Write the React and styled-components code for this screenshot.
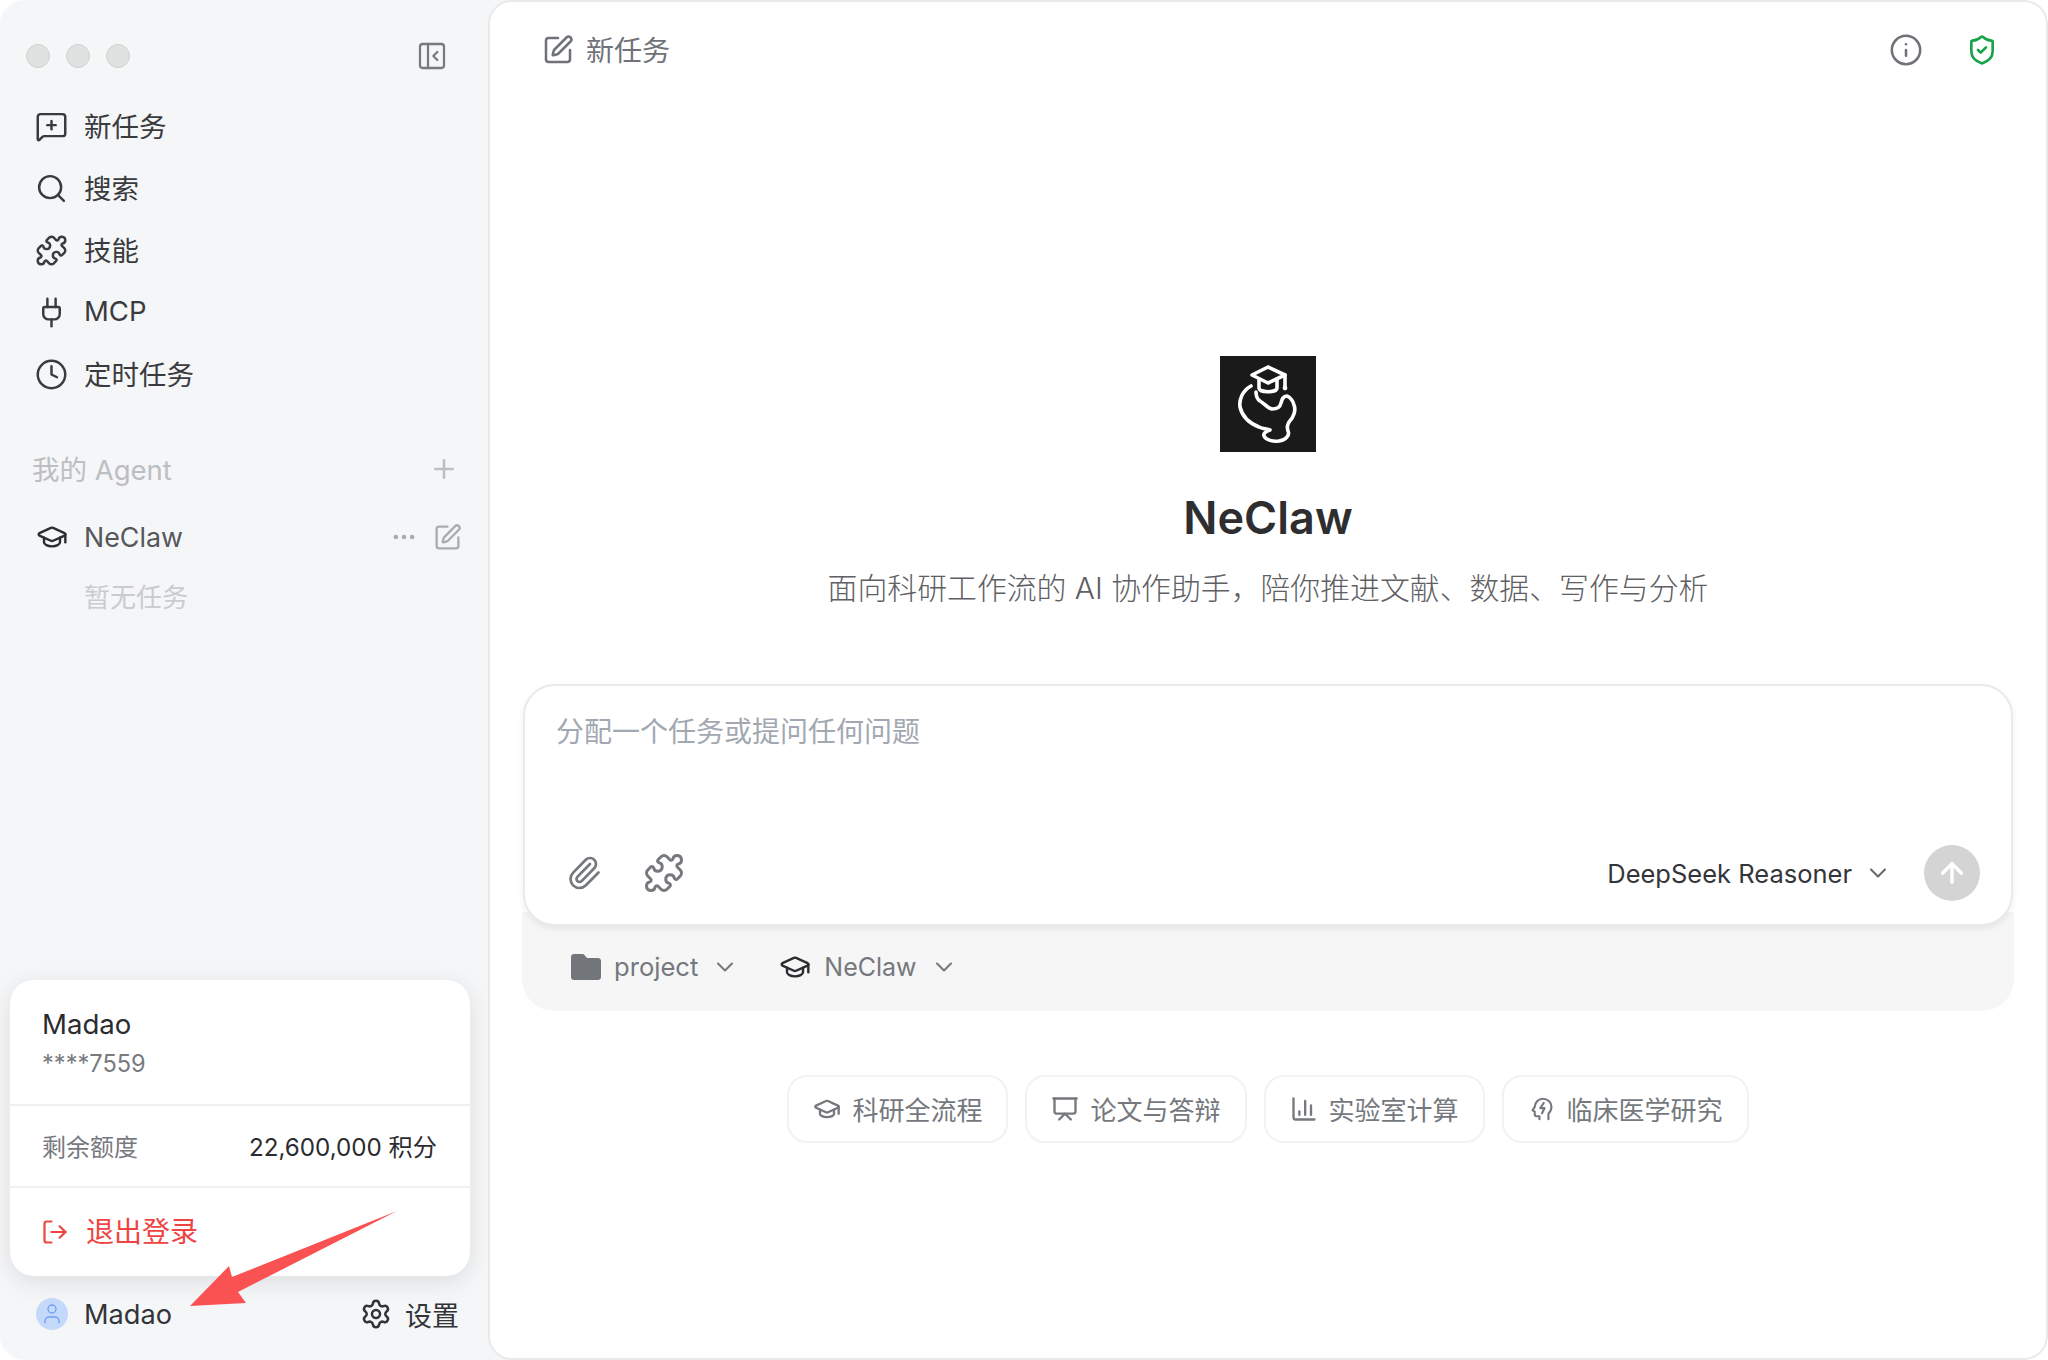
import React from "react";
import styled, { createGlobalStyle } from "styled-components";
import {
  MessageSquarePlus, Search, Puzzle, Plug, Clock, PanelLeftClose, Plus, Ellipsis, SquarePen,
  GraduationCap, LogOut, Settings, User, Paperclip, ChevronDown, ArrowUp, Presentation,
  ChartColumn, Info, ShieldCheck,
} from "lucide-react";

const Global = createGlobalStyle`
  html, body { margin: 0; padding: 0; background: #fff; }
  body { font-family: Inter, "Noto Sans CJK SC", sans-serif; }
  * { box-sizing: border-box; }
`;

const Page = styled.div`
  position: relative;
  display: flex;
  width: 2048px;
  height: 1360px;
  overflow: hidden;
  background: #f5f6f8;
  border-radius: 24px;
`;

const Sidebar = styled.aside`
  position: relative;
  display: flex;
  flex-direction: column;
  flex: 0 0 488px;
  height: 1360px;
`;

const TitleBar = styled.div`
  display: flex;
  align-items: center;
  justify-content: space-between;
  height: 95px;
  padding: 44px 40px 27px 26px;
  color: #77797e;
`;

const Lights = styled.div`
  display: flex;
  gap: 16px;
`;

const Light = styled.span`
  width: 24px;
  height: 24px;
  border-radius: 50%;
  background: #e0e1e1;
  border: 1px solid #cfd0d0;
`;

const Nav = styled.nav`
  display: flex;
  flex-direction: column;
`;

const NavItem = styled.div`
  display: flex;
  align-items: center;
  gap: 16px;
  height: 62px;
  padding-left: 35px;
  font-size: 27.5px;
  color: #3a3b3e;
`;

const Label = styled.span`
  margin-bottom: ${(p) => p.$lift || 2}px;
`;

const SectionHead = styled.div`
  display: flex;
  align-items: center;
  justify-content: space-between;
  height: 50px;
  margin-top: 39px;
  padding: 0 29px 0 32px;
  font-size: 27.5px;
  color: #bcbec2;
`;

const AgentRow = styled.div`
  display: flex;
  align-items: center;
  gap: 16px;
  height: 62px;
  margin-top: 12px;
  padding: 0 26px 0 36px;
  font-size: 26.8px;
  color: #55575b;
`;

const AgentActions = styled.div`
  display: flex;
  align-items: center;
  gap: 15px;
  margin-left: auto;
  color: #a9abaf;
`;

const EmptyTasks = styled.div`
  height: 58px;
  padding-left: 84px;
  font-size: 26px;
  line-height: 60px;
  color: #cacbcf;
`;

const BottomBar = styled.div`
  display: flex;
  align-items: center;
  height: 60px;
  margin-top: auto;
  margin-bottom: 16px;
  padding: 0 29px 0 36px;
  color: #333438;
`;

const Avatar = styled.span`
  display: flex;
  align-items: center;
  justify-content: center;
  width: 32px;
  height: 32px;
  border-radius: 50%;
  background: #c5d9fa;
  color: #6f9ef0;
`;

const UserName = styled.span`
  margin-left: 16px;
  font-size: 27.2px;
`;

const SettingsLink = styled.span`
  display: flex;
  align-items: center;
  gap: 13px;
  margin-left: auto;
  font-size: 27px;
`;

const AccountCard = styled.div`
  position: absolute;
  left: 10px;
  bottom: 84px;
  width: 460px;
  height: 296px;
  border-radius: 24px;
  background: #fff;
  box-shadow: 0 6px 24px rgba(0, 0, 0, 0.1);
`;

const CardHead = styled.div`
  height: 126px;
  padding: 24px 32px 0;
  border-bottom: 2px solid #eff0f1;
`;

const CardName = styled.div`
  font-size: 27.6px;
  line-height: 40px;
  color: #2b2c2f;
`;

const CardPhone = styled.div`
  font-size: 23.6px;
  line-height: 40px;
  color: #797b80;
`;

const QuotaRow = styled.div`
  display: flex;
  align-items: center;
  justify-content: space-between;
  height: 82px;
  padding: 0 33px 0 32px;
  border-bottom: 2px solid #eff0f1;
`;

const QuotaLabel = styled.span`
  margin-bottom: 2px;
  font-size: 24px;
  color: #77797e;
`;

const QuotaValue = styled.span`
  margin-bottom: 2px;
  font-size: 24.2px;
  color: #2b2c2f;
`;

const LogoutRow = styled.div`
  display: flex;
  align-items: center;
  gap: 17px;
  height: 88px;
  padding-left: 31px;
  font-size: 28px;
  color: #ef4444;
`;

const ArrowMark = styled.svg`
  position: absolute;
  left: 180px;
  top: 1200px;
`;

const Main = styled.main`
  flex: 1;
  display: flex;
  flex-direction: column;
  align-items: center;
  height: 1360px;
  background: #fff;
  border: 2px solid #e9eaec;
  border-radius: 24px;
`;

const Header = styled.header`
  align-self: stretch;
  display: flex;
  align-items: center;
  justify-content: space-between;
  height: 96px;
  margin-bottom: 2px;
  padding: 0 48px 0 52px;
  color: #6f7278;
`;

const HeaderTitle = styled.div`
  display: flex;
  align-items: center;
  gap: 12px;
  font-size: 28px;
`;

const HeaderTools = styled.div`
  display: flex;
  align-items: center;
  gap: 43px;
`;

const Shield = styled(ShieldCheck)`
  color: #16a34a;
`;

const Logo = styled.svg`
  margin-top: 256px;
  flex: none;
`;

const Title = styled.h1`
  margin: 36px 0 0;
  font-size: 45px;
  line-height: 60px;
  font-weight: 600;
  color: #2e2e30;
`;

const Subtitle = styled.p`
  margin: 20px 0 0;
  font-size: 29.87px;
  font-weight: 300;
  line-height: 40px;
  color: #5e6064;
`;

const Composer = styled.section`
  width: 1492px;
  margin-top: 76px;
`;

const InputBox = styled.div`
  position: relative;
  z-index: 1;
  display: flex;
  flex-direction: column;
  justify-content: space-between;
  height: 242px;
  margin: 0 1px;
  padding: 26px 31px 23px 31px;
  background: #fff;
  border: 2px solid #e9eaec;
  border-radius: 32px;
  box-shadow: 0 3px 6px rgba(0, 0, 0, 0.07);
`;

const Placeholder = styled.div`
  font-size: 28px;
  line-height: 40px;
  color: #a2a8b2;
`;

const InputTools = styled.div`
  display: flex;
  align-items: center;
`;

const AttachTools = styled.div`
  display: flex;
  align-items: center;
  gap: 41px;
  padding-left: 10px;
  color: #75787d;
`;

const ModelPicker = styled.div`
  display: flex;
  align-items: center;
  gap: 12px;
  margin-left: auto;
  font-size: 25.5px;
  color: #34353a;

  svg {
    color: #66686c;
  }
`;

const SendButton = styled.button`
  display: flex;
  align-items: center;
  justify-content: center;
  width: 56px;
  height: 56px;
  margin-left: 32px;
  padding: 0;
  border: none;
  border-radius: 50%;
  background: #d4d4d4;
  color: #fff;
`;

const ContextBar = styled.div`
  display: flex;
  align-items: center;
  height: 99px;
  margin-top: -14px;
  padding: 10px 0 0 49px;
  background: #f6f6f6;
  border-radius: 0 0 32px 32px;
  color: #75787d;
`;

const ContextItem = styled.div`
  display: flex;
  align-items: center;
  gap: 13px;
  margin-right: 40px;
  font-size: ${(p) => p.$size}px;
`;

const ChipRow = styled.div`
  display: flex;
  justify-content: center;
  gap: 17px;
  margin-top: 64px;
`;

const Chip = styled.div`
  display: flex;
  align-items: center;
  gap: 11px;
  height: 68px;
  padding: 0 24px;
  border: 2px solid #f2f2f3;
  border-radius: 20px;
  font-size: 26px;
  color: #75787d;
`;

const FolderGlyph = () => (
  <svg width="30" height="26" viewBox="0 0 30 26" fill="#72757a">
    <path d="M3 0h8c1.2 0 2 .5 2.8 1.4L16 4h11c1.7 0 3 1.3 3 3v16c0 1.7-1.3 3-3 3H3c-1.7 0-3-1.300-3-3V3c0-1.700 1.300-3 3-3z" />
  </svg>
);

const HeadBolt = () => (
  <svg width="28" height="24" viewBox="0 0 26 28" fill="none" stroke="currentColor" strokeWidth="2.5" strokeLinecap="round" strokeLinejoin="round">
    <path d="M10 26v-3.500H6.500a2 2 0 0 1-2-2V17L2 15.500l2.500-4C5 6 9 2 14 2c5.500 0 10 4 10 9.500 0 4-1.500 6-3.500 8V26" />
    <path d="M15 7l-4 6h5l-3 6" />
  </svg>
);

const LogoMark = () => (
  <Logo width="96" height="96" viewBox="0 0 96 96">
    <rect width="96" height="96" fill="#1a1a1a" />
    <g fill="none" stroke="#fff" strokeWidth="3.6" strokeLinecap="round" strokeLinejoin="round">
      <path d="M48 11 32 19l16 8 17-8z" />
      <path d="M39 24v8c0 5 18 5 18 0v-8" />
      <path d="M65 19v11" />
      <path d="M31 30C22 35 19 44 20 51c2 9 9 16 19 20 4 2 8 2 11 3-3 1-7 3-6 6 2 4 9 6 15 5 7-1 11-6 9-10-1-4-1-5 1-9 5-5 7-12 5-17-1-4-4-8-7-9-4 0-5 3-6 7-1 5-5 6-9 6-5-1-8-6-12-8-3-2-4-6-4-9" />
    </g>
    <circle cx="65" cy="32" r="2.400" fill="#fff" />
  </Logo>
);

const navItems = [
  [MessageSquarePlus, "新任务"],
  [Search, "搜索"],
  [Puzzle, "技能"],
  [Plug, "MCP"],
  [Clock, "定时任务"],
];

const chips = [
  [<GraduationCap key="a" size={28} strokeWidth={2} />, "科研全流程"],
  [<Presentation key="b" size={28} strokeWidth={2} />, "论文与答辩"],
  [<ChartColumn key="c" size={28} strokeWidth={2} />, "实验室计算"],
  [<HeadBolt key="d" />, "临床医学研究"],
];

export default function App() {
  return (
    <>
      <Global />
      <Page>
        <Sidebar>
          <TitleBar>
            <Lights>
              <Light />
              <Light />
              <Light />
            </Lights>
            <PanelLeftClose size={32} strokeWidth={1.7} />
          </TitleBar>
          <Nav>
            {navItems.map(([Icon, label]) => (
              <NavItem key={label}>
                <Icon size={33} strokeWidth={1.8} />
                <Label>{label}</Label>
              </NavItem>
            ))}
          </Nav>
          <SectionHead>
            <Label>我的 Agent</Label>
            <Plus size={30} strokeWidth={2} />
          </SectionHead>
          <AgentRow>
            <GraduationCap size={32} strokeWidth={1.8} color="#2b2c2f" />
            NeClaw
            <AgentActions>
              <Ellipsis size={28} strokeWidth={2} />
              <SquarePen size={29} strokeWidth={1.9} />
            </AgentActions>
          </AgentRow>
          <EmptyTasks>暂无任务</EmptyTasks>
          <BottomBar>
            <Avatar>
              <User size={24} strokeWidth={1.3} />
            </Avatar>
            <UserName>Madao</UserName>
            <SettingsLink>
              <Settings size={32} strokeWidth={1.9} />
              设置
            </SettingsLink>
          </BottomBar>
          <AccountCard>
            <CardHead>
              <CardName>Madao</CardName>
              <CardPhone>****7559</CardPhone>
            </CardHead>
            <QuotaRow>
              <QuotaLabel>剩余额度</QuotaLabel>
              <QuotaValue>22,600,000 积分</QuotaValue>
            </QuotaRow>
            <LogoutRow>
              <LogOut size={28} strokeWidth={1.9} />
              <Label $lift={4}>退出登录</Label>
            </LogoutRow>
          </AccountCard>
          <ArrowMark width="230" height="120" viewBox="180 1200 230 120">
            <path d="M397 1211 232 1277 229 1266 190 1306 246 1303 238 1292z" fill="#fa5252" />
          </ArrowMark>
        </Sidebar>
        <Main>
          <Header>
            <HeaderTitle>
              <SquarePen size={32} strokeWidth={1.9} />
              <Label $lift={3}>新任务</Label>
            </HeaderTitle>
            <HeaderTools>
              <Info size={34} strokeWidth={1.8} />
              <Shield size={32} strokeWidth={2} />
            </HeaderTools>
          </Header>
          <LogoMark />
          <Title>NeClaw</Title>
          <Subtitle>面向科研工作流的 AI 协作助手，陪你推进文献、数据、写作与分析</Subtitle>
          <Composer>
            <InputBox>
              <Placeholder>分配一个任务或提问任何问题</Placeholder>
              <InputTools>
                <AttachTools>
                  <Paperclip size={36} strokeWidth={1.8} />
                  <Puzzle size={42} strokeWidth={1.7} />
                </AttachTools>
                <ModelPicker>
                  DeepSeek Reasoner
                  <ChevronDown size={28} strokeWidth={1.8} />
                </ModelPicker>
                <SendButton>
                  <ArrowUp size={32} strokeWidth={2.6} />
                </SendButton>
              </InputTools>
            </InputBox>
            <ContextBar>
              <ContextItem $size={25.6}>
                <FolderGlyph />
                project
                <ChevronDown size={28} strokeWidth={1.8} />
              </ContextItem>
              <ContextItem $size={25}>
                <GraduationCap size={32} strokeWidth={1.8} color="#2b2c2f" />
                NeClaw
                <ChevronDown size={28} strokeWidth={1.8} />
              </ContextItem>
            </ContextBar>
          </Composer>
          <ChipRow>
            {chips.map(([icon, label]) => (
              <Chip key={label}>
                {icon}
                <Label>{label}</Label>
              </Chip>
            ))}
          </ChipRow>
        </Main>
      </Page>
    </>
  );
}
